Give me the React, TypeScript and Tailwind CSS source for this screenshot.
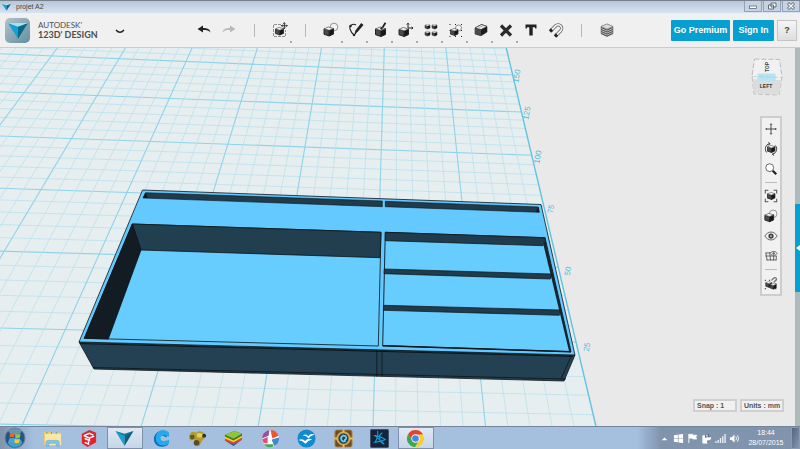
import React from 'react';
import clsx from 'clsx';

type Point = [number, number];

// Corners of a 6 x 5 patch of major cells on the work plane, in view units
const corners: Point[] = [
  [576, 342],
  [-41, 327],
  [119, 58.7],
  [512.7, 75],
];

// Projects plane coordinates (u to the left, v away from the viewer) to the view
function project(u: number, v: number): Point {
  const [[x0, y0], [x1, y1], [x2, y2], [x3, y3]] = corners;
  const s = u / 6;
  const t = (v - 1) / 5;
  const dx1 = x1 - x2;
  const dx2 = x3 - x2;
  const sx = x0 - x1 + x2 - x3;
  const dy1 = y1 - y2;
  const dy2 = y3 - y2;
  const sy = y0 - y1 + y2 - y3;
  const det = dx1 * dy2 - dx2 * dy1;
  const g = (sx * dy2 - dx2 * sy) / det;
  const h = (dx1 * sy - sx * dy1) / det;
  const w = g * s + h * t + 1;
  return [
    ((x1 - x0 + g * x1) * s + (x3 - x0 + h * x3) * t + x0) / w,
    ((y1 - y0 + g * y1) * s + (y3 - y0 + h * y3) * t + y0) / w,
  ];
}

const range = (from: number, to: number) => Array.from({ length: to - from + 1 }, (_, i) => from + i);

function PlaneLine({ from, to, major }: { from: Point; to: Point; major: boolean }) {
  return (
    <line
      x1={from[0]}
      y1={from[1]}
      x2={to[0]}
      y2={to[1]}
      stroke={major ? '#8fd3e8' : '#bde1ec'}
      strokeWidth={major ? 1.1 : 0.8}
    />
  );
}

const rulerLabels = [
  { text: '150', x: 517, y: 76 },
  { text: '125', x: 527, y: 113 },
  { text: '100', x: 538, y: 157 },
  { text: '75', x: 551, y: 209 },
  { text: '50', x: 568, y: 271 },
  { text: '25', x: 587, y: 347 },
];

function Scene() {
  const plane = [project(0, -0.5), project(12, -0.5), project(12, 8), project(0, 8)];
  return (
    <svg
      className="absolute inset-0 h-full w-full"
      viewBox="0 48 795 378"
      preserveAspectRatio="xMidYMid slice"
      role="img"
      aria-label="Drawer organiser on the work plane"
    >
      <polygon points={plane.join(' ')} fill="#e6eef0" />
      {range(-2, 40).map((i) => (
        <PlaneLine key={`v${i}`} from={project(0, i / 5)} to={project(12, i / 5)} major={i % 5 === 0} />
      ))}
      {range(1, 60).map((i) => (
        <PlaneLine key={`u${i}`} from={project(i / 5, -0.5)} to={project(i / 5, 8)} major={i % 5 === 0} />
      ))}
      <polyline points={[plane[0], plane[3]].join(' ')} stroke="#62c3df" strokeWidth="1.4" />
      {rulerLabels.map(({ text, x, y }) => (
        <text
          key={text}
          x={x}
          y={y}
          transform={`rotate(-80 ${x} ${y})`}
          textAnchor="middle"
          dominantBaseline="central"
          fontSize="8"
          fill="#4dbcdb"
          className="font-['Liberation_Sans',sans-serif]"
        >
          {text}
        </text>
      ))}

      {/* Outer body */}
      <g stroke="#0b151b" strokeWidth="0.8" strokeLinejoin="round">
        <polygon points="79,342 575,355 564,381 94,369" fill="#234152" />
        <polygon points="142.5,190 541,204.5 575,355 79,342" fill="#63c9fe" />
        <path d="M93 367.500 566 379 M376.800 350v26.500 M382 350v26.500 M571 356.500 561 379" fill="none" />
      </g>
      <path d="M80 343.600 573 356.400" stroke="#0b151b" strokeWidth="1" />

      {/* Back slots */}
      <g fill="#203b4b" stroke="#0b151b" strokeWidth="0.6">
        <polygon points="145.500,192.700 382.300,201 382.300,206.700 143,198" />
        <polygon points="385.300,201.300 538.300,207 539.300,212.300 385.300,206.700" />
      </g>
      <path d="M145.500 192.700 148 198 143 198Z M538.300 207 536 212 539.300 212.300Z" fill="#10191f" />

      {/* Large tray */}
      <g stroke="#0b151b" strokeWidth="0.8" strokeLinejoin="round">
        <polygon points="132.300,224 381,232.300 378.300,346 84.300,338.300" fill="#67cdff" />
        <polygon points="132.300,224 381,232.300 380,257.700 141,250" fill="#223f4f" />
        <polygon points="132.300,224 141,250 108.300,339 84.300,338.300" fill="#131c22" />
      </g>

      {/* Small trays */}
      <polygon points="385.300,232.300 545,237.700 571,351.700 382.700,345.700" fill="#67cdff" stroke="#0b151b" strokeWidth="0.9" />
      <path d="M545 238 571 351.500 569 351 543.500 245Z" fill="#15242d" />
      <g fill="#203b4b" stroke="#0b151b" strokeWidth="0.7">
        <polygon points="385.300,232.300 545,237.700 543,245.700 385.300,240.700" />
        <polygon points="384.300,269 552,274 550.300,279 384,273.700" />
        <polygon points="383.700,305.300 560,310 559.300,315.300 383.300,310.300" />
      </g>
      <path d="M382.700 345.700 571 351.700" stroke="#0b151b" strokeWidth="1.400" />
    </svg>
  );
}

function Cube({ x = 0, y = 0, size = 10 }: { x?: number; y?: number; size?: number }) {
  return (
    <g transform={`translate(${x} ${y}) scale(${size / 10})`}>
      <path d="M0 2.500 5.500 4 5.500 10 0 8.200Z" fill="#4a4a4a" />
      <path d="M5.500 4 10 2.200 10 8 5.500 10Z" fill="#161616" />
      <path d="M0 2.500 4.500.500 10 2.200 5.500 4Z" fill="#f4f4f4" stroke="#444" strokeWidth=".7" />
    </g>
  );
}

function Icon({ children, small }: { children: React.ReactNode; small?: boolean }) {
  return (
    <svg viewBox="0 0 16 16" className={small ? 'size-[14px]' : 'size-4'} fill="none" stroke="#222" strokeWidth="1" aria-hidden="true">
      {children}
    </svg>
  );
}

function MoveMark({ x, y, r = 3 }: { x: number; y: number; r?: number }) {
  return (
    <path
      strokeWidth=".9"
      d={`M${x - r} ${y}h${2 * r}M${x} ${y - r}v${2 * r}M${x - 1} ${y - r + 1}l1-1 1 1M${x - 1} ${y + r - 1}l1 1 1-1M${x - r + 1} ${y - 1}l-1 1 1 1M${x + r - 1} ${y - 1}l1 1-1 1`}
    />
  );
}

type Tool = { label: string; icon: React.ReactNode; menu?: boolean } | null;

const tools: Tool[] = [
  { label: 'Undo', icon: <path d="M1.500 7 7 3.500V6c4 0 7 1 7.500 4.500C13 8.600 10.500 8 7 8v2.500Z" fill="#222" stroke="none" /> },
  { label: 'Redo', icon: <path d="M14.500 7 9 3.500V6c-4 0-7 1-7.500 4.500C3 8.600 5.500 8 9 8v2.500Z" fill="#b9b9b9" stroke="none" /> },
  null,
  {
    label: 'Insert',
    menu: true,
    icon: (
      <>
        <path d="M9 2.500H1.500v12h12V8" stroke="#777" strokeWidth=".8" strokeDasharray="3 1" />
        <Cube x={3.500} y={5} size={8} />
        <MoveMark x={12.300} y={3.700} />
      </>
    ),
  },
  null,
  {
    label: 'Primitives',
    menu: true,
    icon: (
      <>
        <circle cx="11" cy="5" r="3.800" fill="#f5f5f5" stroke="#777" strokeWidth=".8" />
        <Cube x={1} y={4.500} size={9.500} />
      </>
    ),
  },
  {
    label: 'Sketch',
    menu: true,
    icon: (
      <>
        <path d="M8 3C5 1 1 3.500 2 7c1 3 2 4.500 4 6 2-1 2-2.500 2.500-4" strokeWidth="1.100" />
        <path d="M13.200 1 15.500 3 9.500 10 6.500 11.500 7.500 8.500Z" fill="#222" stroke="none" />
        <circle cx="2.500" cy="4" r="1.200" fill="#222" stroke="none" />
        <circle cx="6" cy="13" r="1.200" fill="#222" stroke="none" />
      </>
    ),
  },
  {
    label: 'Construct',
    menu: true,
    icon: (
      <>
        <Cube x={2.500} y={4.500} size={10} />
        <path d="M12.500.800 9.500 5.500" strokeWidth="1.800" />
        <circle cx="8.500" cy="6.500" r="1.200" fill="#222" stroke="none" />
      </>
    ),
  },
  {
    label: 'Modify',
    menu: true,
    icon: (
      <>
        <Cube x={1} y={5} size={9.500} />
        <path d="M10 1.500V6h5M8.800 2.500 10 1.200l1.200 1.300M13.700 4.800 15 6l-1.300 1.200" />
      </>
    ),
  },
  {
    label: 'Pattern',
    menu: true,
    icon: (
      <>
        <Cube x={2} y={2} size={5} />
        <Cube x={9} y={2} size={5} />
        <Cube x={2} y={9} size={5} />
        <Cube x={9} y={9} size={5} />
      </>
    ),
  },
  {
    label: 'Grouping',
    menu: true,
    icon: (
      <>
        <path d="M1.500 2.500h1M7 2.500h1M13 2.500h1M1.500 14.500h1M7 14.500h1M13 14.500h1M1.500 8.500h1M13 8.500h1" />
        <circle cx="10.500" cy="6" r="3" fill="#f5f5f5" stroke="#777" strokeWidth=".8" />
        <Cube x={2.500} y={6} size={7.500} />
      </>
    ),
  },
  {
    label: 'Combine',
    menu: true,
    icon: (
      <>
        <path d="M2 6 8.500 2.500 14 4.500V10L8 13.800 2 12Z" fill="#1c1c1c" stroke="#222" strokeWidth=".6" />
        <path d="M2 6 8 7.500V13.800L2 12Z" fill="#4a4a4a" stroke="none" />
        <path d="M2 6 8.500 2.500 14 4.500 8 7.500Z" fill="#f2f2f2" strokeWidth=".6" />
        <path d="M5.500 5.600 11 3.600" stroke="#888" strokeWidth=".7" />
      </>
    ),
  },
  { label: 'Measure', menu: true, icon: <path d="M3 3.500 13 13.500M13 3.500 3 13.500" strokeWidth="3.200" stroke="#2b2b2b" /> },
  { label: 'Text', icon: <path d="M2.500 2.500h11v4h-1.200l-.5-1.200H9.700v8.200H6.300V5.300H4.200l-.5 1.200H2.500Z" fill="#222" stroke="none" /> },
  {
    label: 'Snap',
    icon: (
      <>
        <path d="M3 8.500 7.500 4C11 .500 16 5.500 12.500 9L8 13.500" stroke="#555" strokeWidth="3.200" />
        <path d="M3 8.500 7.500 4C11 .500 16 5.500 12.500 9L8 13.500" stroke="#f2f2f2" strokeWidth="1.800" />
        <path d="M4 7.500 2 9.500M9 12.500 7 14.500" strokeWidth="3.200" />
      </>
    ),
  },
  null,
  {
    label: 'Material',
    icon: (
      <>
        <path d="M2 4.500 8 2l6 2.500V11.500L8 14.500 2 11.500Z" fill="#bbb" stroke="#777" strokeWidth=".6" />
        <path d="M2 5.500 8 8l6-2.500M2 7.500 8 10l6-2.500M2 9.500 8 12l6-2.500M2 11.500 8 14l6-2.500" stroke="#444" strokeWidth=".9" />
        <path d="M2 4.500 8 2l6 2.500L8 7Z" fill="#ddd" stroke="#777" strokeWidth=".6" />
      </>
    ),
  },
];

const navTools: Tool[] = [
  { label: 'Pan', icon: <MoveMark x={8} y={8} r={6} /> },
  {
    label: 'Orbit',
    icon: (
      <>
        <Cube x={4} y={3.500} size={8.500} />
        <path d="M3 12C0 8 2 3 6 2M5 .5 7 2 5 3.500M13 4c3 4 1 8.500-3 10M11 12.500 9.500 14 11.500 15.500" />
      </>
    ),
  },
  {
    label: 'Zoom',
    icon: (
      <>
        <circle cx="6.500" cy="6.500" r="4.500" fill="#fff" stroke="#555" />
        <path d="M10 10 14 14" strokeWidth="2.600" />
      </>
    ),
  },
  null,
  {
    label: 'Fit',
    icon: (
      <>
        <path d="M1.500 5V1.500H5M11 1.500h3.500V5M14.500 11v3.500H11M5 14.500H1.500V11" stroke="#555" strokeWidth="1.200" />
        <Cube x={4} y={3.500} size={8.500} />
      </>
    ),
  },
  {
    label: 'Shading',
    icon: (
      <>
        <circle cx="10.500" cy="5.500" r="4.300" fill="#f5f5f5" stroke="#888" />
        <Cube x={1} y={4.500} size={10} />
      </>
    ),
  },
  {
    label: 'Visibility',
    icon: (
      <>
        <path d="M1 8c3.500-6 10.500-6 14 0-3.500 6-10.500 6-14 0Z" stroke="#555" />
        <circle cx="8" cy="8" r="3" fill="#444" stroke="none" />
        <circle cx="8" cy="8" r="1" fill="#ccc" stroke="none" />
      </>
    ),
  },
  {
    label: 'Grid visibility',
    icon: (
      <>
        <path d="M2 4.500h6M1.500 8h13M3 12.500h11M2 4 3.500 13M6.500 4l1 9M11 8v5M14 8v5" stroke="#555" />
        <path d="M7 5c2-3 6-3 8 0-2 3-6 3-8 0Z" fill="#f4f4f4" stroke="#555" />
        <circle cx="11" cy="5" r="1.300" fill="#444" stroke="none" />
      </>
    ),
  },
  null,
  {
    label: 'Snap grouping',
    icon: (
      <>
        <path d="M1 5h1M6 5h1M1 14.500h1M13 14.500h1M13 9h1" strokeWidth="1.400" />
        <Cube x={2} y={6} size={7} />
        <Cube x={7} y={8} size={7} />
        <path d="M8.500 5 11 2.500C13 .5 15.500 3.500 13.500 5L11 7.500" stroke="#777" strokeWidth="1.600" />
      </>
    ),
  },
];

function Bird({ className }: { className: string }) {
  return (
    <svg viewBox="0 0 24 20" className={className} aria-hidden="true">
      <path d="M0 1 12 5 12 20Z" fill="#13a0d4" />
      <path d="M24 1 12 5 12 20Z" fill="#0b6686" />
      <path d="M0 1 24 1 12 5.500Z" fill="#a9e0ee" />
    </svg>
  );
}

function TitleBar() {
  const button = 'grid h-full w-[18px] place-items-center border border-t-0 border-[#93a3b7] bg-[#c4d2e2]';
  return (
    <header className="flex h-[13px] items-center border-t border-[#77818d] bg-linear-to-b from-[#b9c6d7] to-[#d5e3f2] pl-[2px]">
      <Bird className="h-[8px] w-[9px]" />
      <h1 className="ml-[5px] text-[7px] leading-[10px] text-[#444]">projet A2</h1>
      <div className="ml-auto flex h-[11px] gap-px self-start">
        <button className={button} aria-label="Minimise">
          <svg viewBox="0 0 10 8" className="h-[8px] w-[10px]"><rect x="1.500" y="4" width="7" height="2.500" fill="#fff" stroke="#5e6b7b" strokeWidth=".8" /></svg>
        </button>
        <button className={button} aria-label="Restore">
          <svg viewBox="0 0 10 8" className="h-[8px] w-[10px]"><path d="M4 1h5v4H4ZM1.500 3h5v4h-5Z" fill="#fff" stroke="#5e6b7b" /></svg>
        </button>
        <button className={button} aria-label="Close">
          <svg viewBox="0 0 10 8" className="h-[8px] w-[10px]">
            <path d="M2 1 8 7M8 1 2 7" stroke="#5e6b7b" strokeWidth="3" />
            <path d="M2.500 1.500 7.500 6.500M7.500 1.500 2.500 6.500" stroke="#fff" strokeWidth="1.300" />
          </svg>
        </button>
      </div>
    </header>
  );
}

function Toolbar() {
  return (
    <div className="flex h-[35px] items-center border-b border-[#cbcbcb] bg-[#f0f0f0] pr-[3px]">
      <div className="flex w-[191px] shrink-0 items-center pl-[5px]">
        <div className="grid size-[25px] place-items-center rounded-[5px] bg-linear-to-br from-[#b4c2ca] to-[#62909f]">
          <Bird className="h-[17px] w-[20px]" />
        </div>
        <div className="ml-[8px] font-['Lato',sans-serif] leading-[10px] whitespace-nowrap text-[#4d4d4d]">
          <div className="text-[8px]">AUTODESK'</div>
          <div className="text-[9px] font-bold">123D' DESIGN</div>
        </div>
        <button className="mr-[66px] ml-auto pt-[3px]" aria-label="Application menu">
          <svg viewBox="0 0 10 5" className="h-[5px] w-[10px]"><path d="M1 1Q5 5.500 9 1" fill="none" stroke="#222" strokeWidth="1.500" /></svg>
        </button>
      </div>

      <nav className="flex shrink-0 items-center" aria-label="Tools">
        {tools.map((tool, i) =>
          tool ? (
            <button key={i} title={tool.label} aria-label={tool.label} className="relative grid h-[26px] w-[25px] place-items-center">
              <Icon>{tool.icon}</Icon>
              {tool.menu && <span className="absolute right-0 bottom-0 size-[2px] bg-[#aaa]" />}
            </button>
          ) : (
            <div key={i} className="flex w-[26px] justify-center">
              <div className="h-[13px] w-px bg-[#b8b8b8]" />
            </div>
          ),
        )}
      </nav>

      <div className="ml-auto flex gap-[3px] text-[9px] leading-[10px] font-bold whitespace-nowrap text-white">
        <button className="h-[21px] w-[59px] rounded-[1px] bg-[#059fd1]">Go Premium</button>
        <button className="h-[21px] w-[41px] rounded-[1px] bg-[#059fd1]">Sign In</button>
        <button className="h-[21px] w-[20px] border border-[#c4c4c4] bg-linear-to-b from-[#f6f6f6] to-[#dedede] text-[#444]" aria-label="Help">
          ?
        </button>
      </div>
    </div>
  );
}

function ViewCube() {
  return (
    <button aria-label="View cube" className="mr-[12px]">
      <svg viewBox="0 0 32 38" className="h-[38px] w-[32px]">
        <path d="M3.500 1 28.500 1.500 31 19 28 37 3 36 1 18Z" fill="#f1f1f1" stroke="#bcbcbc" strokeDasharray="5 2" />
        <path d="M1.500 21 30.500 22 28 36.500 3 35.500Z" fill="#dcdcdc" />
        <rect x="6.500" y="15.500" width="18" height="7.500" fill="#b6e4f2" />
        <path d="M1 18.500 31 19.500" stroke="#aacbd4" strokeWidth=".7" strokeDasharray="5 2" />
        <text x="15.500" y="9" transform="rotate(-90 15.500 9)" textAnchor="middle" dominantBaseline="central" fontSize="5" fontWeight="700" fill="#444">TOP</text>
        <text x="15" y="30" textAnchor="middle" fontSize="5" fontWeight="700" fill="#333">LEFT</text>
      </svg>
    </button>
  );
}

function Viewport() {
  const statusButton = 'h-[13px] border-2 border-[#cfcfcf] bg-[#f1f1f1] px-[2px] text-left text-[7px] leading-[9px] font-bold whitespace-nowrap text-[#555]';
  return (
    <main className="flex min-h-[378px] flex-1">
      <div className="relative flex min-w-0 flex-1 flex-col items-end overflow-hidden bg-[#e9e9e9]">
        <Scene />
        <div className="relative flex flex-1 flex-col items-end pt-[10px]">
          <ViewCube />
          <nav className="mt-[20px] mr-[13px] flex w-[22px] flex-col items-center border-2 border-[#cdcdcd] bg-[#f1f1f1] py-px" aria-label="Navigation">
            {navTools.map((tool, i) =>
              tool ? (
                <button key={i} title={tool.label} aria-label={tool.label} className="grid h-[20px] w-[18px] place-items-center">
                  <Icon small>{tool.icon}</Icon>
                </button>
              ) : (
                <div key={i} className="my-[3px] h-px w-[12px] bg-[#bbb]" />
              ),
            )}
          </nav>
          <div className="mt-auto mr-[11px] mb-[14px] flex gap-[3px]">
            <button className={clsx(statusButton, 'w-[44px]')}>Snap : 1</button>
            <button className={clsx(statusButton, 'w-[44px]')}>Units : mm</button>
          </div>
        </div>
      </div>
      <aside className="w-[5px] bg-[#aebbbb] pt-[156px]">
        <button className="grid h-[88px] w-[5px] place-items-center bg-[#079fd2]" aria-label="Open parts panel">
          <svg viewBox="0 0 4 6" className="h-[6px] w-[4px]"><path d="M0 3 4 0V6Z" fill="#fff" /></svg>
        </button>
      </aside>
    </main>
  );
}

const apps = [
  {
    label: 'Explorer',
    art: (
      <>
        <path d="M1 3h7l1 1h10v13H1Z" fill="#e9c96c" />
        <path d="M2 5h17v12H2Z" fill="#f8e7a5" />
        <path d="M4 3v2M9 3v2M14 3v2" stroke="#66a867" />
        <path d="M3 18v-4q0-2 2-2h10q2 0 2 2v4h-3v-3H6v3Z" fill="#82c7e9" stroke="#5ba5ce" strokeWidth=".6" />
      </>
    ),
  },
  {
    label: 'SketchUp',
    art: (
      <>
        <path d="M3 5 11 1 18 4V14L9 19 3 15Z" fill="#e3222c" />
        <path d="M5 7 11 4.500 15 6.500M5 7 11 9.500V12L6 10M11 9.500 16 7.500M6 14 10 16V13" fill="none" stroke="#fff" strokeWidth="1.500" />
      </>
    ),
  },
  {
    label: '123D Design',
    active: true,
    art: (
      <>
        <path d="M.500 2 10 6 10 18Z" fill="#16a1d2" />
        <path d="M19.500 2 10 6 10 18Z" fill="#0b5f80" />
        <path d="M.500 2 10 5 19.500 2 10 7.500Z" fill="#0d7da4" />
      </>
    ),
  },
  {
    label: 'Cura',
    art: (
      <>
        <path d="M17 5C11-1 2 3 2 10.500S10 21 17 16.500L15 12C11 15 7.500 14 7.500 10.500S11 5.500 15 9Z" fill="#106fb5" />
        <path d="M18 4C12-2 4 2 4 9.500S11 19.500 18 15.500V11C13 14 9 13 9 9.500S13 5.500 18 8.500Z" fill="#23a9ed" />
      </>
    ),
  },
  {
    label: 'MeshLab',
    art: (
      <>
        <path d="M1 7Q4 1 8 4L12 2Q18 3 19 8L15 12 12 18 6 16 7 11 2 12Z" fill="#b39b32" />
        <path d="M9 5Q13 3 16 6L14 9 10 9Z" fill="#e1d05b" />
        <circle cx="4.500" cy="8.500" r="2.500" fill="#655723" />
        <circle cx="9" cy="14.500" r="3" fill="#5b4c26" />
        <circle cx="17" cy="7" r="2" fill="#2d301c" />
      </>
    ),
  },
  {
    label: 'BlueStacks',
    art: (
      <>
        <path d="M1 12 11 8 19 11 10 18Z" fill="#2a5ba7" />
        <path d="M1 10 11 6 19 9V11L10 16 1 12Z" fill="#e34133" />
        <path d="M1 8 11 4 19 7V9L10 14 1 10Z" fill="#f4d127" />
        <path d="M1 6 11 2 19 5V7L10 12 1 8Z" fill="#437c1e" />
        <path d="M1 6 11 2 19 5 10 10Z" fill="#8cc63e" />
      </>
    ),
  },
  {
    label: 'Picasa',
    art: (
      <>
        <circle cx="10" cy="10" r="9" fill="#fff" />
        <path d="M9 1A9 9 0 0 0 1 10L8 7Z" fill="#8d55aa" />
        <path d="M10 1A9 9 0 0 1 18.500 7L12 10Z" fill="#e9572c" />
        <path d="M19 9A9 9 0 0 1 14 18L11 11Z" fill="#4287cf" />
        <path d="M13 18.500A9 9 0 0 1 3 16H13Z" fill="#43a850" />
        <path d="M1 11 8 8V15H3Z" fill="#e54b82" />
        <path d="M7 7 12 10 11 15H7Z" fill="#fff" />
      </>
    ),
  },
  {
    label: 'OpenOffice',
    art: (
      <>
        <circle cx="10" cy="10" r="9.500" fill="#118bd0" />
        <path d="M6 6.500Q9.500 4.500 12 7.500 14.500 4 18.500 6 14.500 6.500 12.500 10 10 7 6 6.500ZM1.500 11.500Q6 9.500 8.500 12.500 11.500 9 16 11 11.500 12 9 15.500 6 12 1.500 11.500Z" fill="#fff" />
      </>
    ),
  },
  {
    label: 'Hearthstone',
    art: (
      <>
        <rect x="1" y="1" width="18" height="18" rx="2" fill="#6e4928" stroke="#b18b43" />
        <circle cx="10" cy="10" r="6.500" fill="#27435c" stroke="#d2a747" strokeWidth="2.200" />
        <path d="M10 0v4M10 16v4M0 10h4M16 10h4" stroke="#e0bb57" strokeWidth="2" />
        <path d="M12.500 12.500C8 15 5.500 9 9.500 7c4-1 4.500 5 1 4.500" fill="none" stroke="#6ecdf3" strokeWidth="1.800" />
      </>
    ),
  },
  {
    label: 'Battle.net',
    art: (
      <>
        <rect x=".500" y=".500" width="19" height="19" rx="1" fill="#15243a" stroke="#405267" />
        <path d="M8 2C9 7 7 12 5 14c4-1 8-1 11-3-3-2-7-4-11-4 4 3 8 7 10 9-3-1-5-4-5-7s1-4 3-5" fill="none" stroke="#129cd6" strokeWidth="1.200" />
      </>
    ),
  },
  {
    label: 'Chrome',
    active: true,
    art: (
      <>
        <circle cx="10" cy="10" r="9" fill="#f6cd35" />
        <path d="M2.200 5.500A9 9 0 0 1 17.800 5.500L10 6 6.500 12Z" fill="#df4435" />
        <path d="M2.200 5.500A9 9 0 0 0 9.500 19L13.500 12 10 14 6.500 12Z" fill="#38a852" />
        <circle cx="10" cy="10" r="4.400" fill="#fff" />
        <circle cx="10" cy="10" r="3.500" fill="#4489e8" />
      </>
    ),
  },
];

const trayIcons = [
  { label: 'Show hidden icons', art: <path d="M3 8 6 5 9 8Z" fill="#fff" /> },
  { label: 'Windows update', art: <path d="M1 2.500 5.300 1.800V5.600H1ZM6 1.700 11 1V5.600H6ZM1 6.400H5.300V10.200L1 9.500ZM6 6.400H11V11L6 10.300Z" fill="#fff" /> },
  { label: 'Action centre', art: <path d="M2 1V11M2.500 1.500H6L7 2.500H10.500L9.500 4.500 10.500 6.500H6.500L5.500 5.500H2.500Z" fill="#fff" stroke="#fff" /> },
  {
    label: 'Power',
    art: (
      <>
        <path d="M2 3h5v8H2Z" fill="#fff" stroke="#fff" />
        <path d="M5 2v2M8 1v3M4.500 4.500h5V7L7.500 8.500V11" fill="none" stroke="#52657f" strokeWidth="1.100" />
        <path d="M6 4.500h5V6.500L8.500 8.500 6 6.500Z" fill="#fff" />
      </>
    ),
  },
  { label: 'Network', art: <path d="M1 9v2M3.500 7.500V11M6 5.500V11M8.500 3.500V11M11 1V11" stroke="#e9eef4" strokeWidth="1.500" /> },
  {
    label: 'Volume',
    art: (
      <>
        <path d="M1 4.500H3L6 1.500V10.500L3 7.500H1Z" fill="#fff" />
        <path d="M7.500 4q1.500 2 0 4M9.300 2.500q2.500 3.500 0 7" fill="none" stroke="#fff" />
      </>
    ),
  },
];

function Taskbar() {
  return (
    <footer className="flex h-[23px] items-center border-t border-[#74859a] bg-[#a5bfde]">
      <div className="flex h-full w-[34px] shrink-0 items-center bg-linear-to-r from-[#8194ad] to-[#a5bfde] pl-[4px]">
        <button aria-label="Start">
          <svg viewBox="0 0 22 22" className="size-[22px]">
            <circle cx="11" cy="11" r="10" fill="#245681" stroke="#62809e" />
            <ellipse cx="11" cy="15.500" rx="7" ry="4.500" fill="#3ea2ce" />
            <path d="M4 3.800Q11-1 18 3.800 16 8 11 8T4 3.800Z" fill="#8bacc8" opacity=".7" />
            <path d="M6 6.500Q8 5.500 10.500 6.500L10 10.500Q7.500 9.500 5.500 10.500Z" fill="#ee6131" />
            <path d="M11.500 7Q14 8 16.500 6.500L16 10.500Q13.500 11.800 11 10.800Z" fill="#94c83d" />
            <path d="M5.300 11.500Q7.500 10.500 9.800 11.500L9.300 15.500Q7 14.500 4.800 15.500Z" fill="#42a4e2" />
            <path d="M10.800 12Q13.500 13 15.800 11.500L15.200 15.500Q13 16.800 10.300 15.800Z" fill="#fbc63c" />
          </svg>
        </button>
      </div>
      <nav className="grid h-full w-[400px] shrink-0 grid-cols-11" aria-label="Applications">
        {apps.map(({ label, art, active }) => (
          <button
            key={label}
            title={label}
            aria-label={label}
            className={clsx(
              'grid h-full place-items-center',
              active && 'border border-[#7e91aa] bg-linear-to-b from-[#e0e8f2] to-[#c6d5e7]',
            )}
          >
            <svg viewBox="0 0 20 20" className="size-[19px]">{art}</svg>
          </button>
        ))}
      </nav>
      <div className="ml-auto flex h-full items-center bg-linear-to-r from-[#a5bfde] to-[#8194ad] to-[24px] pl-[20px] text-white">
        {trayIcons.map(({ label, art }) => (
          <button key={label} title={label} aria-label={label} className="grid w-[14px] place-items-center">
            <svg viewBox="0 0 12 12" className="size-[11px]">{art}</svg>
          </button>
        ))}
        <time dateTime="2015-07-28T18:44" className="w-[50px] text-center text-[7px] leading-[10px]">
          <span className="block">18:44</span>
          <span className="block">28/07/2015</span>
        </time>
        <button className="h-full w-[9px] border border-[#8b9cb2] bg-linear-to-br from-[#52667f] to-[#8799b0]" aria-label="Show desktop" />
      </div>
    </footer>
  );
}

export default function App() {
  return (
    <div className="flex min-h-screen flex-col font-['Liberation_Sans',sans-serif]">
      <TitleBar />
      <Toolbar />
      <Viewport />
      <Taskbar />
    </div>
  );
}
